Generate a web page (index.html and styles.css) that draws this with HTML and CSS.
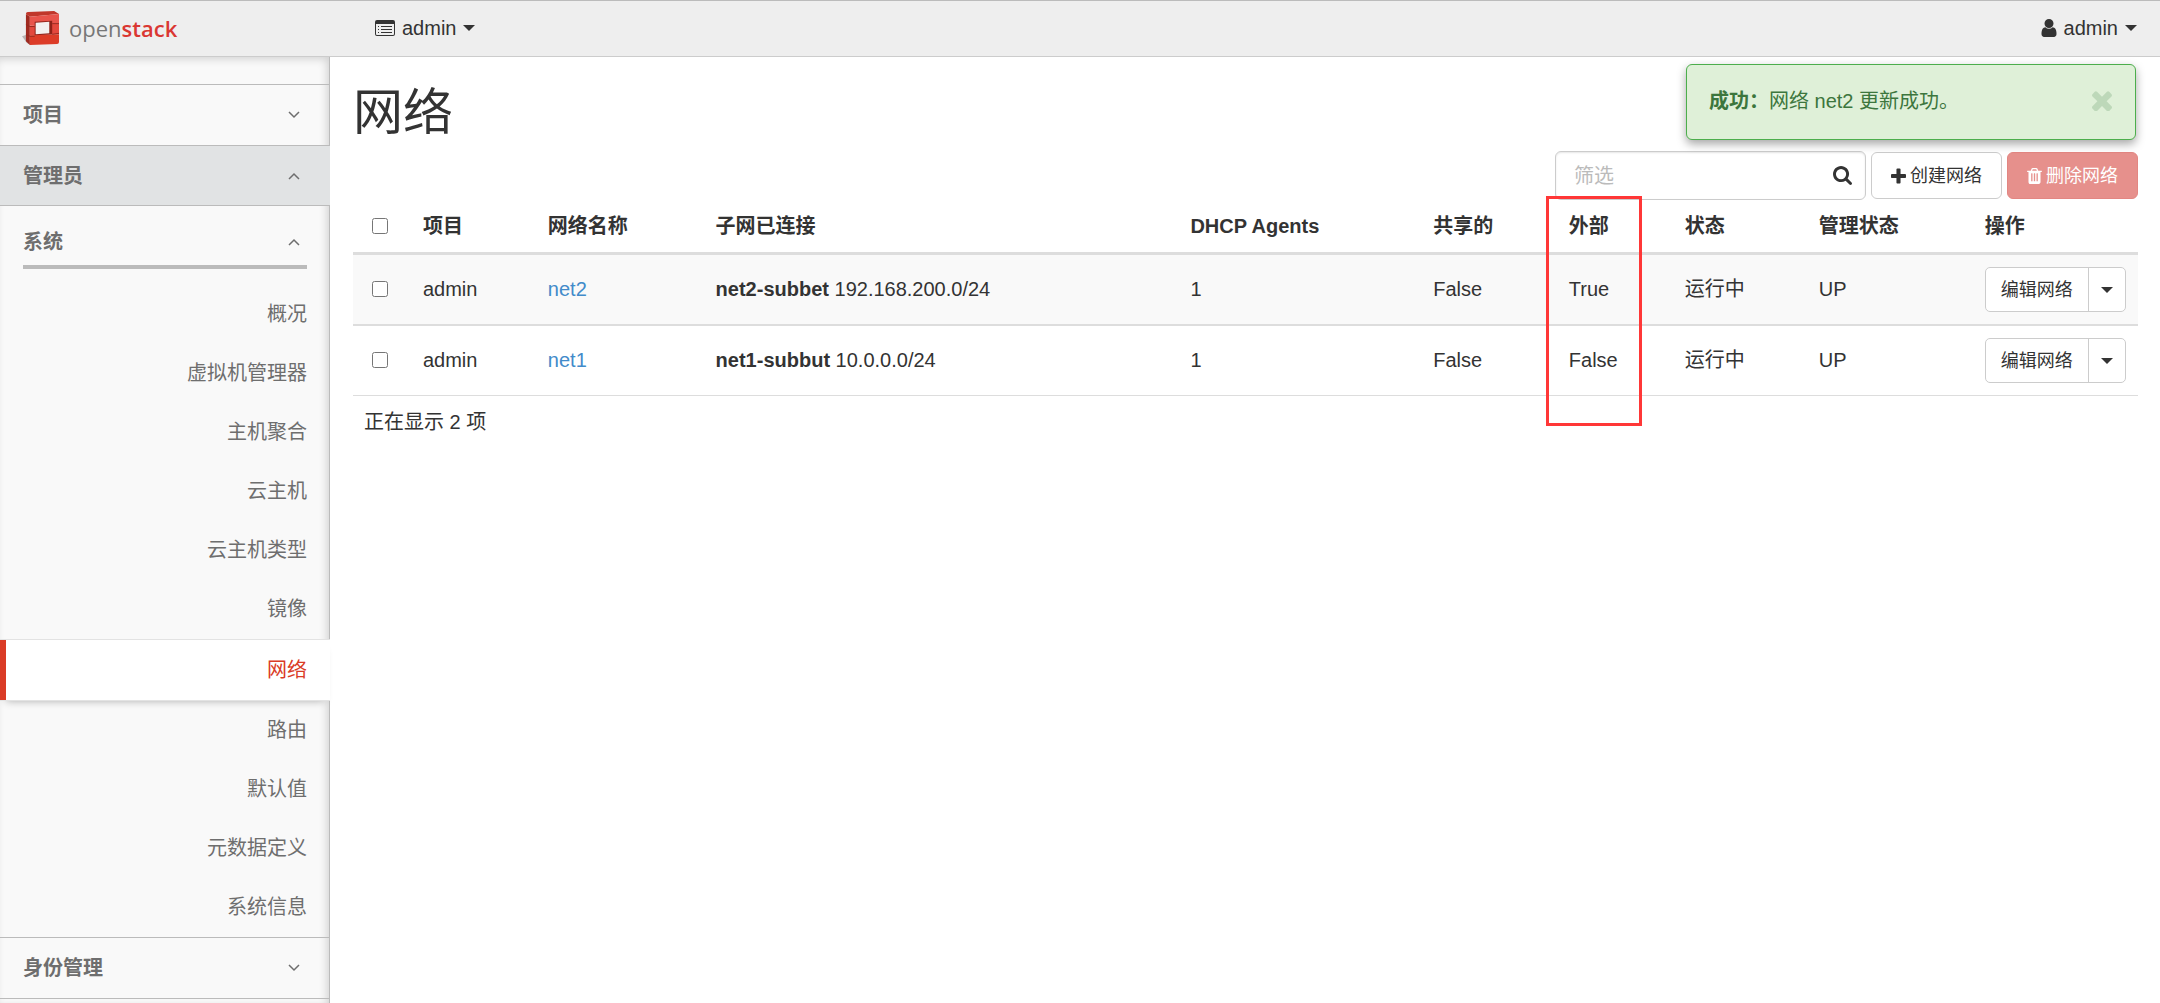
FILE: index.html
```html
<!DOCTYPE html>
<html lang="zh-CN">
<head>
<meta charset="utf-8">
<meta name="viewport" content="width=device-width, initial-scale=1">
<title>网络 - OpenStack Dashboard</title>
<link rel="stylesheet" href="styles.css">
</head>
<body>
<svg class="sprite" aria-hidden="true">
  <symbol id="i-caret" viewBox="0 0 12 6"><path d="M0 0h12L6 6z"/></symbol>
  <symbol id="i-down" viewBox="0 0 12 8"><path d="M1 1l5 5 5-5" fill="none" stroke="currentColor" stroke-width="1.5"/></symbol>
  <symbol id="i-up" viewBox="0 0 12 8"><path d="M1 7l5-5 5 5" fill="none" stroke="currentColor" stroke-width="1.5"/></symbol>
  <symbol id="i-list" viewBox="0 0 20 16"><path fill-rule="evenodd" d="M2 0h16a2 2 0 0 1 2 2v12a2 2 0 0 1-2 2H2a2 2 0 0 1-2-2V2a2 2 0 0 1 2-2zM1 4v10a1 1 0 0 0 1 1h16a1 1 0 0 0 1-1V4z"/><path d="M3 6h1v1H3zM3 9h1v1H3zM3 12h1v1H3zM6 6h11v1H6zM6 9h11v1H6zM6 12h11v1H6z"/></symbol>
  <symbol id="i-user" viewBox="256 128 1280 1536"><path d="M1536 1399q0 109-62.500 187t-150.500 78h-854q-88 0-150.500-78t-62.500-187q0-85 8.500-160.500t31.500-152 58.500-131 94-89 134.500-34.500q131 128 313 128t313-128q76 0 134.500 34.500t94 89 58.500 131 31.500 152 8.500 160.500zm-256-887q0 159-112.500 271.500t-271.500 112.500-271.500-112.500-112.500-271.500 112.500-271.500 271.500-112.500 271.500 112.500 112.500 271.500z"/></symbol>
  <symbol id="i-search" viewBox="64 128 1664 1664"><path d="M1216 832q0-185-131.500-316.500t-316.500-131.500-316.500 131.500-131.500 316.500 131.500 316.500 316.500 131.500 316.500-131.500 131.500-316.500zm512 832q0 52-38 90t-90 38q-54 0-90-38l-343-342q-179 124-399 124-143 0-273.500-55.500t-225-150-150-225-55.500-273.500 55.500-273.500 150-225 225-150 273.500-55.500 273.500 55.500 225 150 150 225 55.500 273.500q0 220-124 399l343 343q37 37 37 90z"/></symbol>
  <symbol id="i-plus" viewBox="192 128 1408 1408"><path d="M1600 736v192q0 40-28 68t-68 28h-416v416q0 40-28 68t-68 28h-192q-40 0-68-28t-28-68v-416h-416q-40 0-68-28t-28-68v-192q0-40 28-68t68-28h416v-416q0-40 28-68t68-28h192q40 0 68 28t28 68v416h416q40 0 68 28t28 68z"/></symbol>
  <symbol id="i-trash" viewBox="192 128 1408 1536"><path d="M704 1376v-704q0-14-9-23t-23-9h-64q-14 0-23 9t-9 23v704q0 14 9 23t23 9h64q14 0 23-9t9-23zm256 0v-704q0-14-9-23t-23-9h-64q-14 0-23 9t-9 23v704q0 14 9 23t23 9h64q14 0 23-9t9-23zm256 0v-704q0-14-9-23t-23-9h-64q-14 0-23 9t-9 23v704q0 14 9 23t23 9h64q14 0 23-9t9-23zm-544-992h448l-48-117q-7-9-17-11h-317q-10 2-17 11zm928 32v64q0 14-9 23t-23 9h-96v948q0 83-47 143.500t-113 60.500h-832q-66 0-113-58.500t-47-141.500v-952h-96q-14 0-23-9t-9-23v-64q0-14 9-23t23-9h309l70-167q15-37 54-63t79-26h320q40 0 79 26t54 63l70 167h309q14 0 23 9t9 23z"/></symbol>
  <symbol id="i-times" viewBox="302 344 1188 1188"><path d="M1490 1322q0 40-28 68l-136 136q-28 28-68 28t-68-28l-294-294-294 294q-28 28-68 28t-68-28l-136-136q-28-28-28-68t28-68l294-294-294-294q-28-28-28-68t28-68l136-136q28-28 68-28t68 28l294 294 294-294q28-28 68-28t68 28l136 136q28 28 28 68t-28 68l-294 294 294 294q28 28 28 68z"/></symbol>
</svg>

<header class="navbar">
  <a class="brand" href="#" aria-label="openstack">
    <svg class="brand-mark" viewBox="0 0 40 37" aria-hidden="true">
      <path d="M0 27l6-2 3 11-4-2z" fill="#b9b4b3"/>
      <path d="M4 4l4 3v29l-4-4z" fill="#a02a20"/>
      <path d="M4 4q0-2 2-2L33 1l5 3L8 7z" fill="#c0372b"/>
      <path d="M8 7l30-3v10L8 16z" fill="#e8544b"/>
      <path d="M8 16l30-2v11L8 26z" fill="#e3483d"/>
      <path d="M8 26l30-1v8q0 2-2 2L8 36z" fill="#dc3c28"/>
      <path d="M13 12l18-1v14l-18 1z" fill="#8f2219"/>
      <path d="M14 13l14-1v12l-14 1z" fill="#f3f1f1"/>
      <path d="M4 15l4 2h5M4 25l4 2h5M31 14h7M31 25l7-1" fill="none" stroke="#96281e" stroke-width="1"/>
    </svg>
    <span class="brand-text">open<b>stack</b></span>
  </a>
  <button class="nav-menu" type="button">
    <svg class="icon-list"><use href="#i-list"/></svg><span>admin</span><svg class="caret"><use href="#i-caret"/></svg>
  </button>
  <button class="nav-menu nav-user" type="button">
    <svg class="icon-user"><use href="#i-user"/></svg><span>admin</span><svg class="caret"><use href="#i-caret"/></svg>
  </button>
</header>

<div class="layout">
  <nav class="sidebar" aria-label="导航">
    <button class="panel" type="button">项目<svg class="chevron"><use href="#i-down"/></svg></button>
    <button class="panel panel-open" type="button" aria-expanded="true">管理员<svg class="chevron"><use href="#i-up"/></svg></button>
    <div class="group">
      <button class="group-title" type="button" aria-expanded="true">系统<svg class="chevron"><use href="#i-up"/></svg></button>
      <a class="item" href="#">概况</a>
      <a class="item" href="#">虚拟机管理器</a>
      <a class="item" href="#">主机聚合</a>
      <a class="item" href="#">云主机</a>
      <a class="item" href="#">云主机类型</a>
      <a class="item" href="#">镜像</a>
      <a class="item active" href="#" aria-current="page">网络</a>
      <a class="item" href="#">路由</a>
      <a class="item" href="#">默认值</a>
      <a class="item" href="#">元数据定义</a>
      <a class="item" href="#">系统信息</a>
    </div>
    <button class="panel panel-last" type="button">身份管理<svg class="chevron"><use href="#i-down"/></svg></button>
  </nav>

  <main class="content">
    <div class="alert" role="alert">
      <p><strong>成功：</strong>网络 net2 更新成功。</p>
      <button class="close" type="button" aria-label="关闭"><svg><use href="#i-times"/></svg></button>
    </div>

    <h1>网络</h1>

    <div class="toolbar">
      <div class="filter">
        <input type="text" placeholder="筛选" aria-label="筛选">
        <button type="button" aria-label="搜索"><svg><use href="#i-search"/></svg></button>
      </div>
      <button class="btn" type="button"><svg class="icon-btn"><use href="#i-plus"/></svg>创建网络</button>
      <button class="btn btn-danger" type="button"><svg class="icon-btn"><use href="#i-trash"/></svg>删除网络</button>
    </div>

    <table class="networks">
      <colgroup>
        <col class="c-check"><col class="c-project"><col class="c-name"><col class="c-subnet"><col class="c-dhcp"><col class="c-shared"><col class="c-external"><col class="c-status"><col class="c-admin"><col class="c-actions">
      </colgroup>
      <thead>
        <tr>
          <th class="check"><input type="checkbox" aria-label="全选"></th>
          <th>项目</th>
          <th>网络名称</th>
          <th>子网已连接</th>
          <th>DHCP Agents</th>
          <th>共享的</th>
          <th class="marked">外部<span class="marker"></span></th>
          <th>状态</th>
          <th>管理状态</th>
          <th>操作</th>
        </tr>
      </thead>
      <tbody>
        <tr>
          <td class="check"><input type="checkbox" aria-label="选择 net2"></td>
          <td>admin</td>
          <td><a href="#">net2</a></td>
          <td><strong>net2-subbet</strong> 192.168.200.0/24</td>
          <td>1</td>
          <td>False</td>
          <td>True</td>
          <td>运行中</td>
          <td>UP</td>
          <td class="actions"><div class="split"><button class="split-main" type="button">编辑网络</button><button class="split-more" type="button" aria-label="更多操作"><svg><use href="#i-caret"/></svg></button></div></td>
        </tr>
        <tr>
          <td class="check"><input type="checkbox" aria-label="选择 net1"></td>
          <td>admin</td>
          <td><a href="#">net1</a></td>
          <td><strong>net1-subbut</strong> 10.0.0.0/24</td>
          <td>1</td>
          <td>False</td>
          <td>False</td>
          <td>运行中</td>
          <td>UP</td>
          <td class="actions"><div class="split"><button class="split-main" type="button">编辑网络</button><button class="split-more" type="button" aria-label="更多操作"><svg><use href="#i-caret"/></svg></button></div></td>
        </tr>
      </tbody>
    </table>
    <p class="count">正在显示 2 项</p>
  </main>
</div>
</body>
</html>
```
FILE: styles.css
```css
*,
*::before,
*::after {
  box-sizing: border-box;
}

body {
  margin: 0;
  min-height: 100vh;
  display: flex;
  flex-direction: column;
  background: #fff;
  color: #333;
  font: 20px/28px "Liberation Sans", "Noto Sans CJK SC", sans-serif;
}

button,
input {
  font: inherit;
  color: inherit;
}

button {
  margin: 0;
  padding: 0;
  border: 0;
  background: none;
  cursor: pointer;
}

a {
  color: #428bca;
  text-decoration: none;
}

p {
  margin: 0;
}

svg {
  display: block;
  flex: none;
  fill: currentColor;
}

.sprite {
  position: absolute;
  width: 0;
  height: 0;
}

/* Top bar */
.navbar {
  display: flex;
  align-items: center;
  height: 57px;
  padding: 0 23px 2px 22px;
  background: #eee;
  border-top: 1px solid #bbb;
  border-bottom: 1px solid #ccc;
}

.brand {
  display: flex;
  align-items: center;
  gap: 8px;
  width: 353px;
  color: #777;
}

.brand-mark {
  width: 39px;
  height: 36px;
}

.brand-text {
  font: 22px/36px "Open Sans", sans-serif;
}

.brand-text b {
  font-weight: 600;
  color: #da3732;
}

.nav-menu {
  display: flex;
  align-items: center;
  gap: 7px;
}

.nav-user {
  margin-left: auto;
}

.icon-list {
  width: 20px;
  height: 16px;
}

.icon-user {
  width: 16px;
  height: 18px;
}

.caret {
  width: 12px;
  height: 6px;
}

/* Side navigation */
.layout {
  display: flex;
  flex: 1;
}

.sidebar {
  flex: none;
  width: 330px;
  padding-top: 27px;
  background: #f9f9f9;
  border-right: 1px solid #bbb;
  box-shadow: inset -3px 3px 8px -1px rgba(0, 0, 0, 0.16);
  color: #6e6e6e;
}

.panel,
.group-title {
  display: flex;
  align-items: center;
  justify-content: space-between;
  font-weight: bold;
  text-align: left;
}

.panel {
  width: 330px;
  height: 61px;
  padding: 0 30px 0 23px;
  border-top: 1px solid #bbb;
}

.panel-open {
  background: #e1e3e4;
  border-bottom: 1px solid #bbb;
}

.panel-last {
  height: 62px;
  border-bottom: 1px solid #bbb;
}

.chevron {
  width: 12px;
  height: 8px;
}

.group {
  padding-top: 13px;
}

.group-title {
  width: 284px;
  height: 50px;
  margin: 0 23px 16px;
  padding: 0 7px 0 0;
  border-bottom: 4px solid #bbb;
}

.item {
  display: block;
  padding: 15px 22px 16px;
  color: #6e6e6e;
  text-align: right;
}

.item.active {
  width: 330px;
  padding: 16px 23px 16px 17px;
  background: #fff;
  border: solid #e3e3e3;
  border-width: 1px 0;
  box-shadow: inset 6px 0 #da3b26, 0 6px 8px -6px rgba(0, 0, 0, 0.3);
  color: #da3b26;
}

/* Page content */
.content {
  position: relative;
  flex: 1;
  min-width: 0;
  padding: 28px 22px 25px 23px;
}

h1 {
  margin: 0 0 10px;
  font-size: 50px;
  line-height: 56px;
  font-weight: normal;
}

.alert {
  position: absolute;
  top: 7px;
  right: 24px;
  display: flex;
  justify-content: space-between;
  align-items: flex-start;
  width: 450px;
  height: 76px;
  padding: 22px;
  background: #dff0d8;
  border: 1px solid #4cae4c;
  border-radius: 6px;
  box-shadow: 0 4px 10px rgba(0, 0, 0, 0.35);
  color: #3c763d;
}

.close {
  padding: 4px 1px;
  color: #bdd8b9;
}

.close svg {
  width: 20px;
  height: 20px;
}

.toolbar {
  display: flex;
  justify-content: flex-end;
  align-items: center;
  gap: 5px;
}

.filter {
  display: flex;
  align-items: center;
  width: 311px;
  height: 49px;
  padding: 0 13px 0 18px;
  border: 1px solid #ccc;
  border-radius: 6px;
  box-shadow: inset 0 1px 2px rgba(0, 0, 0, 0.1);
}

.filter input {
  flex: 1;
  min-width: 0;
  padding: 0;
  border: 0;
  outline: 0;
  background: none;
}

.filter input::placeholder {
  color: #bbb;
}

.filter svg {
  width: 19px;
  height: 19px;
}

.btn {
  display: flex;
  align-items: center;
  justify-content: center;
  gap: 4px;
  width: 131px;
  height: 47px;
  border: 1px solid #ccc;
  border-radius: 6px;
  background: #fff;
  font-size: 18px;
}

.btn-danger {
  background: #e6908c;
  border-color: #e38682;
  color: #fff;
}

.icon-btn {
  width: 15px;
  height: 16px;
}

/* Networks table */
.networks {
  width: 100%;
  table-layout: fixed;
  border-collapse: separate;
  border-spacing: 0;
}

.c-check { width: 3.3%; }
.c-project { width: 7%; }
.c-name { width: 9.4%; }
.c-subnet { width: 26.6%; }
.c-dhcp { width: 13.6%; }
.c-shared { width: 7.6%; }
.c-external { width: 6.5%; }
.c-status { width: 7.5%; }
.c-admin { width: 9.3%; }
.c-actions { width: 9.2%; }

.networks th,
.networks td {
  padding: 12px 11px;
  text-align: left;
  vertical-align: middle;
  white-space: nowrap;
}

.networks th {
  border-bottom: 3px solid #ddd;
}

.networks td {
  padding-top: 10px;
  border-bottom: 1px solid #ddd;
}

.networks .actions {
  padding-top: 12px;
}

.networks tbody tr:nth-child(odd) td {
  background: #f9f9f9;
  border-bottom-width: 2px;
}

.networks .check {
  padding-left: 19px;
}

.check input {
  display: block;
  width: 16px;
  height: 16px;
  margin: 0;
}

.marked {
  position: relative;
}

.marker {
  position: absolute;
  top: -4px;
  left: -12px;
  right: 32px;
  height: 230px;
  border: 3px solid #ff3737;
  pointer-events: none;
}

.split {
  display: flex;
  width: 141px;
  height: 45px;
  border: 1px solid #ccc;
  border-radius: 5px;
  background: #fff;
  font-size: 18px;
}

.split-main {
  flex: 1;
}

.split-more {
  display: flex;
  align-items: center;
  justify-content: center;
  width: 37px;
  border-left: 1px solid #ccc;
}

.split-more svg {
  width: 12px;
  height: 6px;
}

.count {
  padding: 12px 11px;
}
```
